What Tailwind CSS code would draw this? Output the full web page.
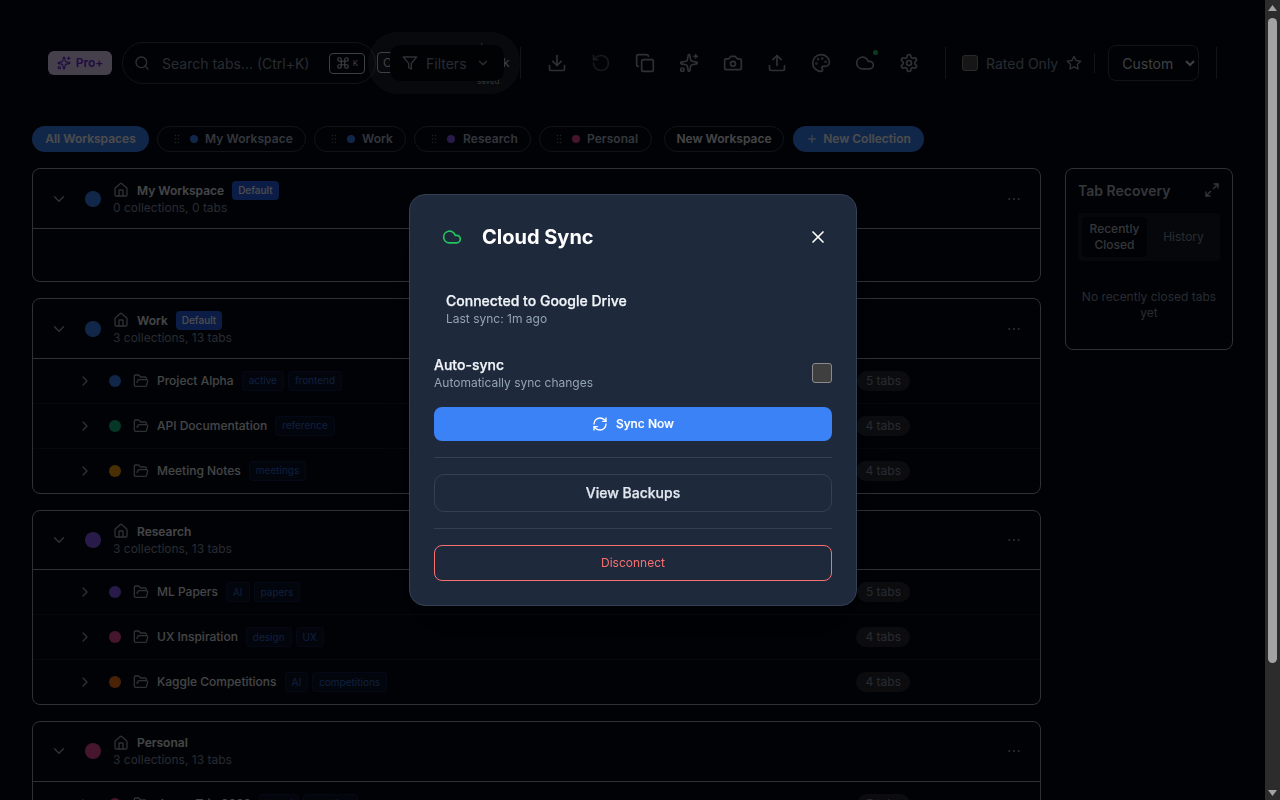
<!DOCTYPE html>
<html lang="en">
<head>
<meta charset="utf-8">
<title>Cloud Sync</title>
<script src="https://cdn.jsdelivr.net/npm/@tailwindcss/browser@4"></script>
</head>
<body class="bg-[#030712] font-[Inter,sans-serif] text-[#e5e7eb]">
<div class="px-[32px] pb-[34px]">
  <header class="relative h-[126px]">
    <div class="absolute left-[16px] top-[45px] flex items-center h-[36px] w-[1184px]">
      <div class="flex items-center gap-[5px] w-[64px] h-[24px] rounded-md bg-[#e9d5ff] text-[#6d28d9] justify-center text-[12px] font-semibold shrink-0">
        <svg class="w-[14px] h-[14px]" viewBox="0 0 24 24" fill="none" stroke="currentColor" stroke-width="2" stroke-linecap="round" stroke-linejoin="round"><path d="M11.017 2.814a1 1 0 0 1 1.966 0l1.051 5.558a2 2 0 0 0 1.594 1.594l5.558 1.051a1 1 0 0 1 0 1.966l-5.558 1.051a2 2 0 0 0-1.594 1.594l-1.051 5.558a1 1 0 0 1-1.966 0l-1.051-5.558a2 2 0 0 0-1.594-1.594l-5.558-1.051a1 1 0 0 1 0-1.966l5.558-1.051a2 2 0 0 0 1.594-1.594z"/><path d="M20 2v4"/><path d="M22 4h-4"/><circle cx="4" cy="20" r="2"/></svg>
        <span>Pro+</span>
      </div>
      <div class="relative flex items-center ml-[10px] w-[254px] h-[42px] rounded-full border border-[#374151] pl-[11px] pr-[10px] shrink-0">
        <svg class="w-[16px] h-[16px] text-[#9ca3af] shrink-0" viewBox="0 0 24 24" fill="none" stroke="currentColor" stroke-width="2" stroke-linecap="round" stroke-linejoin="round"><circle cx="11" cy="11" r="8"/><path d="m21 21-4.3-4.3"/></svg>
        <span class="ml-[12px] text-[14px] text-[#8492a6] whitespace-nowrap">Search tabs... (Ctrl+K)</span>
        <span class="ml-auto flex items-center justify-center gap-[3px] w-[36px] h-[21px] rounded border border-[#cbd5e1] text-[#cbd5e1] text-[8px]">
          <svg class="w-[14px] h-[14px]" viewBox="0 0 24 24" fill="none" stroke="currentColor" stroke-width="2" stroke-linecap="round" stroke-linejoin="round"><path d="M15 6v12a3 3 0 1 0 3-3H6a3 3 0 1 0 3 3V6a3 3 0 1 0-3 3h12a3 3 0 1 0-3-3"/></svg>K
        </span>
      </div>
      <div class="relative w-[144px] h-[36px] shrink-0">
        <span class="absolute left-[1px] top-[7px] w-[40px] h-[21px] rounded border border-[#cbd5e1] text-[#cbd5e1] text-[12px] pl-[5px] leading-[19px]">C</span>
        <span class="absolute left-[127px] top-[10px] text-[12px] leading-[16px] text-[#cbd5e1]">k</span>
        <span class="absolute left-[104px] top-[-4px] text-[8px] leading-[10px] text-[#94a3b8]">(</span>
        <span class="absolute left-[101px] top-[31px] text-[8px] leading-[10px] text-[#94a3b8]">saved</span>
        <div class="absolute left-[-8px] top-[-13px] w-[152px] h-[62px] rounded-[30px] bg-white/10"></div>
        <div class="absolute left-[14px] top-0 w-[114px] h-[36px] rounded-[10px] bg-[#06080e] flex items-center pl-[12px] pr-[14px] text-[14px] text-[#8492a6]">
          <svg class="w-[16px] h-[16px] text-[#9ca3af]" viewBox="0 0 24 24" fill="none" stroke="currentColor" stroke-width="2" stroke-linecap="round" stroke-linejoin="round"><polygon points="22 3 2 3 10 12.46 10 19 14 21 14 12.46 22 3"/></svg>
          <span class="ml-[8px]">Filters</span>
          <svg class="ml-auto w-[14px] h-[14px] text-[#9ca3af]" viewBox="0 0 24 24" fill="none" stroke="currentColor" stroke-width="2" stroke-linecap="round" stroke-linejoin="round"><path d="m6 9 6 6 6-6"/></svg>
        </div>
      </div>
      <div class="w-px h-[32px] bg-[#374151] shrink-0"></div>
      <div class="flex items-center ml-[14px] text-[#9ca3af] shrink-0">
        <span class="w-[44px] flex justify-center"><svg class="w-[20px] h-[20px]" viewBox="0 0 24 24" fill="none" stroke="currentColor" stroke-width="2" stroke-linecap="round" stroke-linejoin="round"><path d="M21 15v4a2 2 0 0 1-2 2H5a2 2 0 0 1-2-2v-4"/><polyline points="7 10 12 15 17 10"/><line x1="12" y1="15" x2="12" y2="3"/></svg></span>
        <span class="w-[44px] flex justify-center text-[#4b5563]"><svg class="w-[20px] h-[20px]" viewBox="0 0 24 24" fill="none" stroke="currentColor" stroke-width="2" stroke-linecap="round" stroke-linejoin="round"><path d="M3 12a9 9 0 1 0 9-9 9.75 9.75 0 0 0-6.74 2.74L3 8"/><path d="M3 3v5h5"/></svg></span>
        <span class="w-[44px] flex justify-center"><svg class="w-[20px] h-[20px]" viewBox="0 0 24 24" fill="none" stroke="currentColor" stroke-width="2" stroke-linecap="round" stroke-linejoin="round"><rect x="8" y="8" width="14" height="14" rx="2"/><path d="M4 16c-1.1 0-2-.9-2-2V4c0-1.1.9-2 2-2h10c1.1 0 2 .9 2 2"/></svg></span>
        <span class="w-[44px] flex justify-center"><svg class="w-[20px] h-[20px]" viewBox="0 0 24 24" fill="none" stroke="currentColor" stroke-width="2" stroke-linecap="round" stroke-linejoin="round"><path d="M11.017 2.814a1 1 0 0 1 1.966 0l1.051 5.558a2 2 0 0 0 1.594 1.594l5.558 1.051a1 1 0 0 1 0 1.966l-5.558 1.051a2 2 0 0 0-1.594 1.594l-1.051 5.558a1 1 0 0 1-1.966 0l-1.051-5.558a2 2 0 0 0-1.594-1.594l-5.558-1.051a1 1 0 0 1 0-1.966l5.558-1.051a2 2 0 0 0 1.594-1.594z"/><path d="M20 2v4"/><path d="M22 4h-4"/><circle cx="4" cy="20" r="2"/></svg></span>
        <span class="w-[44px] flex justify-center"><svg class="w-[20px] h-[20px]" viewBox="0 0 24 24" fill="none" stroke="currentColor" stroke-width="2" stroke-linecap="round" stroke-linejoin="round"><path d="M14.5 4h-5L7 7H4a2 2 0 0 0-2 2v9a2 2 0 0 0 2 2h16a2 2 0 0 0 2-2V9a2 2 0 0 0-2-2h-3l-2.5-3z"/><circle cx="12" cy="13" r="3"/></svg></span>
        <span class="w-[44px] flex justify-center"><svg class="w-[20px] h-[20px]" viewBox="0 0 24 24" fill="none" stroke="currentColor" stroke-width="2" stroke-linecap="round" stroke-linejoin="round"><path d="M21 15v4a2 2 0 0 1-2 2H5a2 2 0 0 1-2-2v-4"/><polyline points="17 8 12 3 7 8"/><line x1="12" y1="3" x2="12" y2="15"/></svg></span>
        <span class="w-[44px] flex justify-center"><svg class="w-[20px] h-[20px]" viewBox="0 0 24 24" fill="none" stroke="currentColor" stroke-width="2" stroke-linecap="round" stroke-linejoin="round"><path d="M12 22a1 1 0 0 1 0-20 10 9 0 0 1 10 9 5 5 0 0 1-5 5h-2.25a1.75 1.75 0 0 0-1.4 2.8l.3.4a1.75 1.75 0 0 1-1.4 2.8z"/><circle cx="13.5" cy="6.5" r=".5" fill="currentColor"/><circle cx="17.5" cy="10.5" r=".5" fill="currentColor"/><circle cx="6.5" cy="12.5" r=".5" fill="currentColor"/><circle cx="8.5" cy="7.5" r=".5" fill="currentColor"/></svg></span>
        <span class="relative w-[44px] flex justify-center"><svg class="w-[20px] h-[20px]" viewBox="0 0 24 24" fill="none" stroke="currentColor" stroke-width="2" stroke-linecap="round" stroke-linejoin="round"><path d="M17.5 19H9a7 7 0 1 1 6.71-9h1.79a4.5 4.5 0 1 1 0 9Z"/></svg><span class="absolute right-[9px] top-[-3px] w-[5px] h-[5px] rounded-full bg-[#22c55e]"></span></span>
        <span class="w-[44px] flex justify-center"><svg class="w-[20px] h-[20px]" viewBox="0 0 24 24" fill="none" stroke="currentColor" stroke-width="2" stroke-linecap="round" stroke-linejoin="round"><path d="M12.22 2h-.44a2 2 0 0 0-2 2v.18a2 2 0 0 1-1 1.73l-.43.25a2 2 0 0 1-2 0l-.15-.08a2 2 0 0 0-2.73.73l-.22.38a2 2 0 0 0 .73 2.73l.15.1a2 2 0 0 1 1 1.72v.51a2 2 0 0 1-1 1.74l-.15.09a2 2 0 0 0-.73 2.73l.22.38a2 2 0 0 0 2.73.73l.15-.08a2 2 0 0 1 2 0l.43.25a2 2 0 0 1 1 1.73V20a2 2 0 0 0 2 2h.44a2 2 0 0 0 2-2v-.18a2 2 0 0 1 1-1.73l.43-.25a2 2 0 0 1 2 0l.15.08a2 2 0 0 0 2.73-.73l.22-.39a2 2 0 0 0-.73-2.73l-.15-.08a2 2 0 0 1-1-1.74v-.5a2 2 0 0 1 1-1.74l.15-.09a2 2 0 0 0 .73-2.73l-.22-.38a2 2 0 0 0-2.73-.73l-.15.08a2 2 0 0 1-2 0l-.43-.25a2 2 0 0 1-1-1.73V4a2 2 0 0 0-2-2z"/><circle cx="12" cy="12" r="3"/></svg></span>
      </div>
      <div class="ml-[14px] w-px h-[32px] bg-[#374151] shrink-0"></div>
      <div class="ml-[16px] w-[16px] h-[16px] rounded-[3px] bg-[#4a4a4a] border border-[#8a8a8a] shrink-0"></div>
      <span class="ml-[8px] text-[14px] text-[#8492a6] whitespace-nowrap">Rated Only</span>
      <svg class="ml-[8px] w-[16px] h-[16px] text-[#9ca3af] shrink-0" viewBox="0 0 24 24" fill="none" stroke="currentColor" stroke-width="2" stroke-linecap="round" stroke-linejoin="round"><polygon points="12 2 15.09 8.26 22 9.27 17 14.14 18.18 21.02 12 17.77 5.82 21.02 7 14.14 2 9.27 8.91 8.26 12 2"/></svg>
      <div class="ml-[12px] w-px h-[20px] bg-[#374151] shrink-0"></div>
      <select class="ml-[13px] w-[91px] h-[36px] rounded-lg bg-[#030712] border border-[#374151] text-[14px] text-[#d1d5db] pl-[9px] shrink-0 [color-scheme:dark]"><option>Custom</option></select>
      <div class="ml-[17px] w-px h-[32px] bg-[#374151] shrink-0"></div>
    </div>
  </header>

  <nav class="flex items-center h-[26px] mb-[16px] text-[12px] font-semibold">
    <span class="flex items-center h-[26px] w-[117px] justify-center rounded-full bg-[#3b82f6] text-white">All Workspaces</span>
    <span class="ml-[8px] flex items-center h-[26px] w-[149px] pl-[13px] rounded-full border border-[#374151] text-[#a8b5c8] tracking-[0.005em]">
      <svg class="w-[12px] h-[12px] text-[#6b7280]" viewBox="0 0 24 24" fill="currentColor"><circle cx="9" cy="12" r="1.5"/><circle cx="9" cy="5" r="1.5"/><circle cx="9" cy="19" r="1.5"/><circle cx="15" cy="12" r="1.5"/><circle cx="15" cy="5" r="1.5"/><circle cx="15" cy="19" r="1.5"/></svg>
      <span class="ml-[7px] w-[8px] h-[8px] rounded-full bg-[#3b82f6]"></span><span class="ml-[7px]">My Workspace</span></span>
    <span class="ml-[8px] flex items-center h-[26px] w-[92px] pl-[13px] rounded-full border border-[#374151] text-[#a8b5c8] tracking-[0.005em]">
      <svg class="w-[12px] h-[12px] text-[#6b7280]" viewBox="0 0 24 24" fill="currentColor"><circle cx="9" cy="12" r="1.5"/><circle cx="9" cy="5" r="1.5"/><circle cx="9" cy="19" r="1.5"/><circle cx="15" cy="12" r="1.5"/><circle cx="15" cy="5" r="1.5"/><circle cx="15" cy="19" r="1.5"/></svg>
      <span class="ml-[7px] w-[8px] h-[8px] rounded-full bg-[#3b82f6]"></span><span class="ml-[7px]">Work</span></span>
    <span class="ml-[8px] flex items-center h-[26px] w-[117px] pl-[13px] rounded-full border border-[#374151] text-[#a8b5c8] tracking-[0.005em]">
      <svg class="w-[12px] h-[12px] text-[#6b7280]" viewBox="0 0 24 24" fill="currentColor"><circle cx="9" cy="12" r="1.5"/><circle cx="9" cy="5" r="1.5"/><circle cx="9" cy="19" r="1.5"/><circle cx="15" cy="12" r="1.5"/><circle cx="15" cy="5" r="1.5"/><circle cx="15" cy="19" r="1.5"/></svg>
      <span class="ml-[7px] w-[8px] h-[8px] rounded-full bg-[#8b5cf6]"></span><span class="ml-[8px]">Research</span></span>
    <span class="ml-[8px] flex items-center h-[26px] w-[113px] pl-[13px] rounded-full border border-[#374151] text-[#a8b5c8] tracking-[0.005em]">
      <svg class="w-[12px] h-[12px] text-[#6b7280]" viewBox="0 0 24 24" fill="currentColor"><circle cx="9" cy="12" r="1.5"/><circle cx="9" cy="5" r="1.5"/><circle cx="9" cy="19" r="1.5"/><circle cx="15" cy="12" r="1.5"/><circle cx="15" cy="5" r="1.5"/><circle cx="15" cy="19" r="1.5"/></svg>
      <span class="ml-[7px] w-[8px] h-[8px] rounded-full bg-[#ec4899]"></span><span class="ml-[7px]">Personal</span></span>
    <span class="ml-[12px] flex items-center justify-center h-[26px] w-[120px] rounded-full border border-[#374151]">New Workspace</span>
    <span class="ml-[9px] flex items-center justify-center gap-[5px] h-[26px] w-[131px] rounded-full bg-[#3b82f6] text-white">
      <svg class="w-[12px] h-[12px]" viewBox="0 0 24 24" fill="none" stroke="currentColor" stroke-width="2" stroke-linecap="round" stroke-linejoin="round"><path d="M5 12h14"/><path d="M12 5v14"/></svg>New Collection</span>
  </nav>

  <main class="grid grid-cols-[1009px_168px] gap-x-[24px] items-start">
    <div class="flex flex-col gap-[16px]">

      <section class="rounded-lg border border-[#a3a3a3]">
        <div class="flex items-center h-[57.5px] pt-[1px] pl-[17px] pr-[18px] border-b border-[#a3a3a3] box-content">
          <svg class="w-[18px] h-[18px] text-[#9ca3af]" viewBox="0 0 24 24" fill="none" stroke="currentColor" stroke-width="2" stroke-linecap="round" stroke-linejoin="round"><path d="m6 9 6 6 6-6"/></svg>
          <span class="ml-[17px] w-[16px] h-[16px] rounded-full bg-[#3b82f6]"></span>
          <div class="ml-[12px] flex flex-col">
            <div class="flex items-center h-[17px]">
              <svg class="w-[16px] h-[16px] text-[#9ca3af]" viewBox="0 0 24 24" fill="none" stroke="currentColor" stroke-width="2" stroke-linecap="round" stroke-linejoin="round"><path d="M15 21v-8a1 1 0 0 0-1-1h-4a1 1 0 0 0-1 1v8"/><path d="M3 10a2 2 0 0 1 .709-1.528l7-5.999a2 2 0 0 1 2.582 0l7 5.999A2 2 0 0 1 21 10v9a2 2 0 0 1-2 2H5a2 2 0 0 1-2-2z"/></svg>
              <span class="ml-[8px] mt-[1px] text-[12px] font-semibold">My Workspace</span>
              <span class="ml-[8px] flex items-center h-[19px] px-[6px] rounded bg-[#2563eb] text-white text-[10px] font-medium">Default</span>
            </div>
            <span class="text-[12px] leading-[17px] text-[#8492a6]">0 collections, 0 tabs</span>
          </div>
          <svg class="ml-auto w-[16px] h-[16px] text-[#9ca3af]" viewBox="0 0 24 24" fill="currentColor"><circle cx="12" cy="12" r="1.5"/><circle cx="19" cy="12" r="1.5"/><circle cx="5" cy="12" r="1.5"/></svg>
        </div>
        <div class="h-[52.5px]"></div>
      </section>

      <section class="rounded-lg border border-[#a3a3a3]">
        <div class="flex items-center h-[57.5px] pt-[1px] pl-[17px] pr-[18px] border-b border-[#a3a3a3] box-content">
          <svg class="w-[18px] h-[18px] text-[#9ca3af]" viewBox="0 0 24 24" fill="none" stroke="currentColor" stroke-width="2" stroke-linecap="round" stroke-linejoin="round"><path d="m6 9 6 6 6-6"/></svg>
          <span class="ml-[17px] w-[16px] h-[16px] rounded-full bg-[#3b82f6]"></span>
          <div class="ml-[12px] flex flex-col">
            <div class="flex items-center h-[17px]">
              <svg class="w-[16px] h-[16px] text-[#9ca3af]" viewBox="0 0 24 24" fill="none" stroke="currentColor" stroke-width="2" stroke-linecap="round" stroke-linejoin="round"><path d="M15 21v-8a1 1 0 0 0-1-1h-4a1 1 0 0 0-1 1v8"/><path d="M3 10a2 2 0 0 1 .709-1.528l7-5.999a2 2 0 0 1 2.582 0l7 5.999A2 2 0 0 1 21 10v9a2 2 0 0 1-2 2H5a2 2 0 0 1-2-2z"/></svg>
              <span class="ml-[8px] mt-[1px] text-[12px] font-semibold">Work</span>
              <span class="ml-[8px] flex items-center h-[19px] px-[6px] rounded bg-[#2563eb] text-white text-[10px] font-medium">Default</span>
            </div>
            <span class="text-[12px] leading-[17px] text-[#8492a6]">3 collections, 13 tabs</span>
          </div>
          <svg class="ml-auto w-[16px] h-[16px] text-[#9ca3af]" viewBox="0 0 24 24" fill="currentColor"><circle cx="12" cy="12" r="1.5"/><circle cx="19" cy="12" r="1.5"/><circle cx="5" cy="12" r="1.5"/></svg>
        </div>
        <div class="flex items-center h-[44px] box-content pl-[44px] pr-[130px] border-b border-[#1f2937]/60">
          <svg class="w-[16px] h-[16px] text-[#9ca3af]" viewBox="0 0 24 24" fill="none" stroke="currentColor" stroke-width="2" stroke-linecap="round" stroke-linejoin="round"><path d="m9 18 6-6-6-6"/></svg>
          <span class="ml-[16px] w-[12px] h-[12px] rounded-full bg-[#3b82f6]"></span>
          <svg class="ml-[12px] w-[16px] h-[16px] text-[#9ca3af]" viewBox="0 0 24 24" fill="none" stroke="currentColor" stroke-width="2" stroke-linecap="round" stroke-linejoin="round"><path d="m6 14 1.5-2.9A2 2 0 0 1 9.24 10H20a2 2 0 0 1 1.94 2.5l-1.54 6a2 2 0 0 1-1.95 1.5H4a2 2 0 0 1-2-2V5a2 2 0 0 1 2-2h3.9a2 2 0 0 1 1.69.9l.81 1.2a2 2 0 0 0 1.67.9H18a2 2 0 0 1 2 2v2"/></svg>
          <span class="ml-[8px] text-[12px] font-medium">Project Alpha</span>
          <span class="ml-[8px] flex items-center h-[20px] px-[6px] rounded border border-[#1e3a8a]/30 bg-[#172554]/40 text-[#3b82f6]/80 text-[10px]">active</span>
          <span class="ml-[4px] flex items-center h-[20px] px-[6px] rounded border border-[#1e3a8a]/30 bg-[#172554]/40 text-[#3b82f6]/80 text-[10px]">frontend</span>
          <span class="ml-auto flex items-center h-[20px] px-[9px] rounded-full bg-white/15 text-[#8492a6] text-[12px]">5 tabs</span>
        </div>
        <div class="flex items-center h-[44px] box-content pl-[44px] pr-[130px] border-b border-[#1f2937]/60">
          <svg class="w-[16px] h-[16px] text-[#9ca3af]" viewBox="0 0 24 24" fill="none" stroke="currentColor" stroke-width="2" stroke-linecap="round" stroke-linejoin="round"><path d="m9 18 6-6-6-6"/></svg>
          <span class="ml-[16px] w-[12px] h-[12px] rounded-full bg-[#10b981]"></span>
          <svg class="ml-[12px] w-[16px] h-[16px] text-[#9ca3af]" viewBox="0 0 24 24" fill="none" stroke="currentColor" stroke-width="2" stroke-linecap="round" stroke-linejoin="round"><path d="m6 14 1.5-2.9A2 2 0 0 1 9.24 10H20a2 2 0 0 1 1.94 2.5l-1.54 6a2 2 0 0 1-1.95 1.5H4a2 2 0 0 1-2-2V5a2 2 0 0 1 2-2h3.9a2 2 0 0 1 1.69.9l.81 1.2a2 2 0 0 0 1.67.9H18a2 2 0 0 1 2 2v2"/></svg>
          <span class="ml-[8px] text-[12px] font-medium">API Documentation</span>
          <span class="ml-[8px] flex items-center h-[20px] px-[6px] rounded border border-[#1e3a8a]/30 bg-[#172554]/40 text-[#3b82f6]/80 text-[10px]">reference</span>
          <span class="ml-auto flex items-center h-[20px] px-[9px] rounded-full bg-white/15 text-[#8492a6] text-[12px]">4 tabs</span>
        </div>
        <div class="flex items-center h-[44px] pl-[44px] pr-[130px]">
          <svg class="w-[16px] h-[16px] text-[#9ca3af]" viewBox="0 0 24 24" fill="none" stroke="currentColor" stroke-width="2" stroke-linecap="round" stroke-linejoin="round"><path d="m9 18 6-6-6-6"/></svg>
          <span class="ml-[16px] w-[12px] h-[12px] rounded-full bg-[#f59e0b]"></span>
          <svg class="ml-[12px] w-[16px] h-[16px] text-[#9ca3af]" viewBox="0 0 24 24" fill="none" stroke="currentColor" stroke-width="2" stroke-linecap="round" stroke-linejoin="round"><path d="m6 14 1.5-2.9A2 2 0 0 1 9.24 10H20a2 2 0 0 1 1.94 2.5l-1.54 6a2 2 0 0 1-1.95 1.5H4a2 2 0 0 1-2-2V5a2 2 0 0 1 2-2h3.9a2 2 0 0 1 1.69.9l.81 1.2a2 2 0 0 0 1.67.9H18a2 2 0 0 1 2 2v2"/></svg>
          <span class="ml-[8px] text-[12px] font-medium">Meeting Notes</span>
          <span class="ml-[8px] flex items-center h-[20px] px-[6px] rounded border border-[#1e3a8a]/30 bg-[#172554]/40 text-[#3b82f6]/80 text-[10px]">meetings</span>
          <span class="ml-auto flex items-center h-[20px] px-[9px] rounded-full bg-white/15 text-[#8492a6] text-[12px]">4 tabs</span>
        </div>
      </section>

      <section class="rounded-lg border border-[#a3a3a3]">
        <div class="flex items-center h-[58.5px] pl-[17px] pr-[18px] border-b border-[#a3a3a3] box-content">
          <svg class="w-[18px] h-[18px] text-[#9ca3af]" viewBox="0 0 24 24" fill="none" stroke="currentColor" stroke-width="2" stroke-linecap="round" stroke-linejoin="round"><path d="m6 9 6 6 6-6"/></svg>
          <span class="ml-[17px] w-[16px] h-[16px] rounded-full bg-[#8b5cf6]"></span>
          <div class="ml-[12px] flex flex-col">
            <div class="flex items-center h-[17px]">
              <svg class="w-[16px] h-[16px] text-[#9ca3af]" viewBox="0 0 24 24" fill="none" stroke="currentColor" stroke-width="2" stroke-linecap="round" stroke-linejoin="round"><path d="M15 21v-8a1 1 0 0 0-1-1h-4a1 1 0 0 0-1 1v8"/><path d="M3 10a2 2 0 0 1 .709-1.528l7-5.999a2 2 0 0 1 2.582 0l7 5.999A2 2 0 0 1 21 10v9a2 2 0 0 1-2 2H5a2 2 0 0 1-2-2z"/></svg>
              <span class="ml-[8px] mt-[1px] text-[12px] font-semibold">Research</span>
            </div>
            <span class="text-[12px] leading-[17px] text-[#8492a6]">3 collections, 13 tabs</span>
          </div>
          <svg class="ml-auto w-[16px] h-[16px] text-[#9ca3af]" viewBox="0 0 24 24" fill="currentColor"><circle cx="12" cy="12" r="1.5"/><circle cx="19" cy="12" r="1.5"/><circle cx="5" cy="12" r="1.5"/></svg>
        </div>
        <div class="flex items-center h-[44px] box-content pl-[44px] pr-[130px] border-b border-[#1f2937]/60">
          <svg class="w-[16px] h-[16px] text-[#9ca3af]" viewBox="0 0 24 24" fill="none" stroke="currentColor" stroke-width="2" stroke-linecap="round" stroke-linejoin="round"><path d="m9 18 6-6-6-6"/></svg>
          <span class="ml-[16px] w-[12px] h-[12px] rounded-full bg-[#8b5cf6]"></span>
          <svg class="ml-[12px] w-[16px] h-[16px] text-[#9ca3af]" viewBox="0 0 24 24" fill="none" stroke="currentColor" stroke-width="2" stroke-linecap="round" stroke-linejoin="round"><path d="m6 14 1.5-2.9A2 2 0 0 1 9.24 10H20a2 2 0 0 1 1.94 2.5l-1.54 6a2 2 0 0 1-1.95 1.5H4a2 2 0 0 1-2-2V5a2 2 0 0 1 2-2h3.9a2 2 0 0 1 1.69.9l.81 1.2a2 2 0 0 0 1.67.9H18a2 2 0 0 1 2 2v2"/></svg>
          <span class="ml-[8px] text-[12px] font-medium">ML Papers</span>
          <span class="ml-[8px] flex items-center h-[20px] px-[6px] rounded border border-[#1e3a8a]/30 bg-[#172554]/40 text-[#3b82f6]/80 text-[10px]">AI</span>
          <span class="ml-[4px] flex items-center h-[20px] px-[6px] rounded border border-[#1e3a8a]/30 bg-[#172554]/40 text-[#3b82f6]/80 text-[10px]">papers</span>
          <span class="ml-auto flex items-center h-[20px] px-[9px] rounded-full bg-white/15 text-[#8492a6] text-[12px]">5 tabs</span>
        </div>
        <div class="flex items-center h-[44px] box-content pl-[44px] pr-[130px] border-b border-[#1f2937]/60">
          <svg class="w-[16px] h-[16px] text-[#9ca3af]" viewBox="0 0 24 24" fill="none" stroke="currentColor" stroke-width="2" stroke-linecap="round" stroke-linejoin="round"><path d="m9 18 6-6-6-6"/></svg>
          <span class="ml-[16px] w-[12px] h-[12px] rounded-full bg-[#ec4899]"></span>
          <svg class="ml-[12px] w-[16px] h-[16px] text-[#9ca3af]" viewBox="0 0 24 24" fill="none" stroke="currentColor" stroke-width="2" stroke-linecap="round" stroke-linejoin="round"><path d="m6 14 1.5-2.9A2 2 0 0 1 9.24 10H20a2 2 0 0 1 1.94 2.5l-1.54 6a2 2 0 0 1-1.95 1.5H4a2 2 0 0 1-2-2V5a2 2 0 0 1 2-2h3.9a2 2 0 0 1 1.69.9l.81 1.2a2 2 0 0 0 1.67.9H18a2 2 0 0 1 2 2v2"/></svg>
          <span class="ml-[8px] text-[12px] font-medium">UX Inspiration</span>
          <span class="ml-[8px] flex items-center h-[20px] px-[6px] rounded border border-[#1e3a8a]/30 bg-[#172554]/40 text-[#3b82f6]/80 text-[10px]">design</span>
          <span class="ml-[4px] flex items-center h-[20px] px-[6px] rounded border border-[#1e3a8a]/30 bg-[#172554]/40 text-[#3b82f6]/80 text-[10px]">UX</span>
          <span class="ml-auto flex items-center h-[20px] px-[9px] rounded-full bg-white/15 text-[#8492a6] text-[12px]">4 tabs</span>
        </div>
        <div class="flex items-center h-[44px] pl-[44px] pr-[130px]">
          <svg class="w-[16px] h-[16px] text-[#9ca3af]" viewBox="0 0 24 24" fill="none" stroke="currentColor" stroke-width="2" stroke-linecap="round" stroke-linejoin="round"><path d="m9 18 6-6-6-6"/></svg>
          <span class="ml-[16px] w-[12px] h-[12px] rounded-full bg-[#f97316]"></span>
          <svg class="ml-[12px] w-[16px] h-[16px] text-[#9ca3af]" viewBox="0 0 24 24" fill="none" stroke="currentColor" stroke-width="2" stroke-linecap="round" stroke-linejoin="round"><path d="m6 14 1.5-2.9A2 2 0 0 1 9.24 10H20a2 2 0 0 1 1.94 2.5l-1.54 6a2 2 0 0 1-1.95 1.5H4a2 2 0 0 1-2-2V5a2 2 0 0 1 2-2h3.9a2 2 0 0 1 1.69.9l.81 1.2a2 2 0 0 0 1.67.9H18a2 2 0 0 1 2 2v2"/></svg>
          <span class="ml-[8px] text-[12px] font-medium">Kaggle Competitions</span>
          <span class="ml-[8px] flex items-center h-[20px] px-[6px] rounded border border-[#1e3a8a]/30 bg-[#172554]/40 text-[#3b82f6]/80 text-[10px]">AI</span>
          <span class="ml-[4px] flex items-center h-[20px] px-[6px] rounded border border-[#1e3a8a]/30 bg-[#172554]/40 text-[#3b82f6]/80 text-[10px]">competitions</span>
          <span class="ml-auto flex items-center h-[20px] px-[9px] rounded-full bg-white/15 text-[#8492a6] text-[12px]">4 tabs</span>
        </div>
      </section>

      <section class="rounded-lg border border-[#a3a3a3]">
        <div class="flex items-center h-[58.5px] pl-[17px] pr-[18px] border-b border-[#a3a3a3] box-content">
          <svg class="w-[18px] h-[18px] text-[#9ca3af]" viewBox="0 0 24 24" fill="none" stroke="currentColor" stroke-width="2" stroke-linecap="round" stroke-linejoin="round"><path d="m6 9 6 6 6-6"/></svg>
          <span class="ml-[17px] w-[16px] h-[16px] rounded-full bg-[#ec4899]"></span>
          <div class="ml-[12px] flex flex-col">
            <div class="flex items-center h-[17px]">
              <svg class="w-[16px] h-[16px] text-[#9ca3af]" viewBox="0 0 24 24" fill="none" stroke="currentColor" stroke-width="2" stroke-linecap="round" stroke-linejoin="round"><path d="M15 21v-8a1 1 0 0 0-1-1h-4a1 1 0 0 0-1 1v8"/><path d="M3 10a2 2 0 0 1 .709-1.528l7-5.999a2 2 0 0 1 2.582 0l7 5.999A2 2 0 0 1 21 10v9a2 2 0 0 1-2 2H5a2 2 0 0 1-2-2z"/></svg>
              <span class="ml-[8px] text-[12px] font-semibold">Personal</span>
            </div>
            <span class="text-[12px] leading-[17px] text-[#8492a6]">3 collections, 13 tabs</span>
          </div>
          <svg class="ml-auto w-[16px] h-[16px] text-[#9ca3af]" viewBox="0 0 24 24" fill="currentColor"><circle cx="12" cy="12" r="1.5"/><circle cx="19" cy="12" r="1.5"/><circle cx="5" cy="12" r="1.5"/></svg>
        </div>
        <div class="flex items-center h-[44px] box-content pl-[44px] pr-[130px] border-b border-[#1f2937]/60">
          <svg class="w-[16px] h-[16px] text-[#9ca3af]" viewBox="0 0 24 24" fill="none" stroke="currentColor" stroke-width="2" stroke-linecap="round" stroke-linejoin="round"><path d="m9 18 6-6-6-6"/></svg>
          <span class="ml-[16px] w-[12px] h-[12px] rounded-full bg-[#ec4899]"></span>
          <svg class="ml-[12px] w-[16px] h-[16px] text-[#9ca3af]" viewBox="0 0 24 24" fill="none" stroke="currentColor" stroke-width="2" stroke-linecap="round" stroke-linejoin="round"><path d="m6 14 1.5-2.9A2 2 0 0 1 9.24 10H20a2 2 0 0 1 1.94 2.5l-1.54 6a2 2 0 0 1-1.95 1.5H4a2 2 0 0 1-2-2V5a2 2 0 0 1 2-2h3.9a2 2 0 0 1 1.69.9l.81 1.2a2 2 0 0 0 1.67.9H18a2 2 0 0 1 2 2v2"/></svg>
          <span class="ml-[8px] text-[12px] font-medium">Japan Trip 2023</span>
          <span class="ml-[8px] flex items-center h-[20px] px-[6px] rounded border border-[#1e3a8a]/30 bg-[#172554]/40 text-[#3b82f6]/80 text-[10px]">travel</span>
          <span class="ml-[4px] flex items-center h-[20px] px-[6px] rounded border border-[#1e3a8a]/30 bg-[#172554]/40 text-[#3b82f6]/80 text-[10px]">vacation</span>
          <span class="ml-auto flex items-center h-[20px] px-[9px] rounded-full bg-white/15 text-[#8492a6] text-[12px]">5 tabs</span>
        </div>
        <div class="flex items-center h-[44px] box-content pl-[44px] pr-[130px] border-b border-[#1f2937]/60">
          <svg class="w-[16px] h-[16px] text-[#9ca3af]" viewBox="0 0 24 24" fill="none" stroke="currentColor" stroke-width="2" stroke-linecap="round" stroke-linejoin="round"><path d="m9 18 6-6-6-6"/></svg>
          <span class="ml-[16px] w-[12px] h-[12px] rounded-full bg-[#10b981]"></span>
          <span class="ml-[36px] text-[12px] font-medium">Recipes</span>
          <span class="ml-auto flex items-center h-[20px] px-[9px] rounded-full bg-white/15 text-[#8492a6] text-[12px]">4 tabs</span>
        </div>
        <div class="flex items-center h-[44px] pl-[44px] pr-[130px]">
          <svg class="w-[16px] h-[16px] text-[#9ca3af]" viewBox="0 0 24 24" fill="none" stroke="currentColor" stroke-width="2" stroke-linecap="round" stroke-linejoin="round"><path d="m9 18 6-6-6-6"/></svg>
          <span class="ml-[16px] w-[12px] h-[12px] rounded-full bg-[#3b82f6]"></span>
          <span class="ml-[36px] text-[12px] font-medium">Home Projects</span>
          <span class="ml-auto flex items-center h-[20px] px-[9px] rounded-full bg-white/15 text-[#8492a6] text-[12px]">4 tabs</span>
        </div>
      </section>
    </div>

    <aside class="h-[182px] rounded-lg border border-[#a3a3a3] px-[12px] pt-[11px]">
      <div class="flex items-center justify-between h-[20px] text-[#b0b5bd]">
        <span class="text-[14px] font-semibold">Tab Recovery</span>
        <svg class="w-[16px] h-[16px]" viewBox="0 0 24 24" fill="none" stroke="currentColor" stroke-width="2" stroke-linecap="round" stroke-linejoin="round"><polyline points="15 3 21 3 21 9"/><polyline points="9 21 3 21 3 15"/><line x1="21" y1="3" x2="14" y2="10"/><line x1="3" y1="21" x2="10" y2="14"/></svg>
      </div>
      <div class="mt-[13px] flex gap-[2px] p-[4px] h-[48px] rounded bg-white/[0.08] text-[12px] leading-[16px]">
        <span class="flex-1 flex items-center justify-center text-center font-medium rounded bg-[#030712] text-[#b0b5bd]">Recently Closed</span>
        <span class="flex-1 flex items-center justify-center pl-[2px] text-[#8492a6]">History</span>
      </div>
      <p class="mt-[28px] text-center text-[12px] leading-[16px] text-[#8492a6]">No recently closed tabs yet</p>
    </aside>
  </main>
</div>

<div class="fixed inset-y-0 left-0 right-[15px] bg-black/70">
  <div class="absolute left-[409px] top-[194px] w-[448px] h-[412px] rounded-2xl bg-[#1e293b] border border-[#334155] px-[24px] pt-[24px] flex flex-col shadow-2xl">
    <div class="flex items-center h-[36px]">
      <svg class="ml-[8px] w-[20px] h-[20px] text-[#22c55e]" viewBox="0 0 24 24" fill="none" stroke="currentColor" stroke-width="2" stroke-linecap="round" stroke-linejoin="round"><path d="M17.5 19H9a7 7 0 1 1 6.71-9h1.79a4.5 4.5 0 1 1 0 9Z"/></svg>
      <h2 class="ml-[20px] text-[20px] font-bold text-white">Cloud Sync</h2>
      <svg class="ml-auto mr-[4px] w-[20px] h-[20px] text-white" viewBox="0 0 24 24" fill="none" stroke="currentColor" stroke-width="2" stroke-linecap="round" stroke-linejoin="round"><path d="M18 6 6 18"/><path d="m6 6 12 12"/></svg>
    </div>
    <div class="mt-[36px] pl-[12px]">
      <p class="text-[14px] leading-[20px] font-medium text-[#f1f5f9] [-webkit-text-stroke:0.25px]">Connected to Google Drive</p>
      <p class="text-[12px] leading-[16px] text-[#94a3b8]">Last sync: 1m ago</p>
    </div>
    <div class="mt-[28px] flex items-center justify-between">
      <div>
        <p class="text-[14px] leading-[20px] font-medium text-[#f1f5f9] [-webkit-text-stroke:0.25px]">Auto-sync</p>
        <p class="text-[12px] leading-[16px] text-[#94a3b8]">Automatically sync changes</p>
      </div>
      <span class="w-[20px] h-[20px] rounded-[3px] bg-[#3f3f3f] border border-[#8a8a8a]"></span>
    </div>
    <button class="mt-[16px] h-[34px] flex items-center justify-center gap-[8px] rounded-lg bg-[#3b82f6] text-white text-[12px] font-medium [-webkit-text-stroke:0.2px]">
      <svg class="w-[16px] h-[16px]" viewBox="0 0 24 24" fill="none" stroke="currentColor" stroke-width="2" stroke-linecap="round" stroke-linejoin="round"><path d="M3 12a9 9 0 0 1 9-9 9.75 9.75 0 0 1 6.74 2.74L21 8"/><path d="M21 3v5h-5"/><path d="M21 12a9 9 0 0 1-9 9 9.75 9.75 0 0 1-6.74-2.74L3 16"/><path d="M8 16H3v5"/></svg>
      Sync Now
    </button>
    <div class="mt-[16px] h-px bg-[#334155]"></div>
    <button class="mt-[16px] h-[38px] pb-[1px] rounded-[10px] border border-[#334155] text-[14px] font-medium text-[#e2e8f0] [-webkit-text-stroke:0.25px]">View Backups</button>
    <div class="mt-[16px] h-px bg-[#334155]"></div>
    <button class="mt-[16px] h-[36px] rounded-lg border border-[#f87171] text-[12px] text-[#f87171]">Disconnect</button>
  </div>
</div>

<div class="fixed top-0 right-0 bottom-0 w-[15px] bg-[#2c2c2c] flex flex-col items-center">
  <svg class="mt-[5px] w-[9px] h-[6px] text-[#a3a3a3]" viewBox="0 0 9 6" fill="currentColor"><polygon points="4.5 0 9 6 0 6"/></svg>
  <div class="mt-[7px] w-[9px] h-[645px] rounded-full bg-[#a3a3a3]"></div>
  <svg class="mt-auto mb-[4px] w-[9px] h-[6px] text-[#a3a3a3]" viewBox="0 0 9 6" fill="currentColor"><polygon points="0 0 9 0 4.5 6"/></svg>
</div>
</body>
</html>
